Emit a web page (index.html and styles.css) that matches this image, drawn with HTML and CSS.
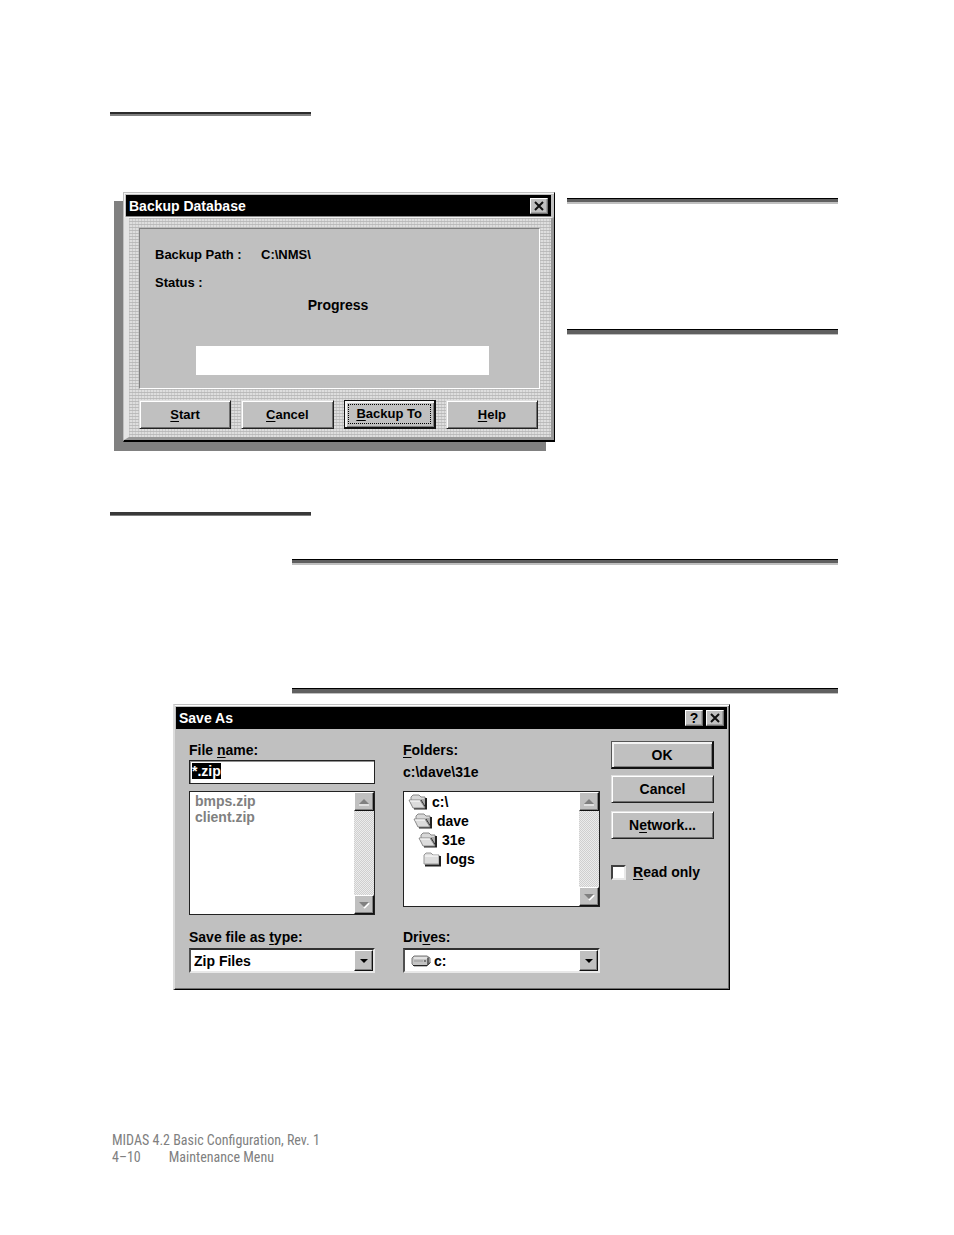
FILE: index.html
```html
<!DOCTYPE html>
<html lang="en">
<head>
<meta charset="utf-8">
<title>MIDAS 4.2 Basic Configuration</title>
<link rel="stylesheet" href="styles.css">
</head>
<body>
<svg class="defs" aria-hidden="true">
  <symbol id="close" viewBox="0 0 12 12"><path d="M2 2l8 8M10 2l-8 8" stroke="#111" stroke-width="2" fill="none"/></symbol>
  <symbol id="up" viewBox="0 0 12 12"><path d="M1 9h10" stroke="#fff"/><path d="M6 3l5 5H1z" fill="#808080"/></symbol>
  <symbol id="down" viewBox="0 0 12 12"><path d="M11 4l-5 5" stroke="#fff" stroke-width="2"/><path d="M1 3h10L6 8z" fill="#808080"/></symbol>
  <symbol id="drop" viewBox="0 0 12 12"><path d="M2 4h8L6 8z" fill="#000"/></symbol>
  <symbol id="open" viewBox="0 0 20 16">
    <path d="M3 6V3l2-2h6l2 2h4v3" fill="#d8d8d8" stroke="#888"/>
    <path d="M12 5h6v9z" fill="#aaa"/>
    <path d="M18 4v10.500H6" fill="none" stroke="#222" stroke-width="2"/>
    <path d="M1 6h11l5 8H5z" fill="#dcdcdc" stroke="#8a8a8a"/>
    <path d="M2 7h10" stroke="#fff"/>
    <path d="M13 6l5 8" stroke="#333"/>
  </symbol>
  <symbol id="shut" viewBox="0 0 20 16">
    <path d="M2 13V4l2-2h5l2 2h6v9z" fill="#dcdcdc" stroke="#999"/>
    <path d="M3 5h13" stroke="#fff"/>
    <path d="M3 14.500h15V5" fill="none" stroke="#222" stroke-width="2"/>
  </symbol>
  <symbol id="disk" viewBox="0 0 20 14">
    <path d="M3 2h13l3 2v5l-3 3H3l-2-2V4z" fill="#c4c4c4" stroke="#777"/>
    <path d="M3 4h13" stroke="#fff"/><path d="M3 7h9" stroke="#999"/><path d="M13 7h2" stroke="#333"/>
    <path d="M16 4l2-1v6l-2 2z" fill="#666"/><path d="M2 11.500h14l3-3" fill="none" stroke="#222"/>
  </symbol>
</svg>
<main class="page">
  <div class="rule rule-heading"></div>

  <div class="row">
    <section class="dialog backup" aria-label="Backup Database">
      <header class="titlebar"><h1>Backup Database</h1>
        <button class="tool" aria-label="Close"><svg><use href="#close"/></svg></button></header>
      <div class="backup-body">
        <div class="panel">
          <dl class="facts">
            <dt>Backup Path :</dt><dd>C:\NMS\</dd>
            <dt>Status :</dt><dd></dd>
          </dl>
          <label class="caption" for="progress">Progress</label>
          <progress id="progress" class="progress" value="0" max="100"></progress>
        </div>
        <div class="actions">
          <button class="btn"><span><u>S</u>tart</span></button>
          <button class="btn"><span><u>C</u>ancel</span></button>
          <button class="btn default focused"><span><u>B</u>ackup To</span></button>
          <button class="btn"><span><u>H</u>elp</span></button>
        </div>
      </div>
    </section>
    <div class="note note-side"></div>
  </div>

  <div class="rule rule-heading second"></div>
  <div class="note note-wide"></div>

  <section class="dialog save" aria-label="Save As">
    <header class="titlebar"><h1>Save As</h1>
      <button class="tool help">?</button>
      <button class="tool" aria-label="Close"><svg><use href="#close"/></svg></button></header>
    <div class="save-body">
      <div class="col files">
        <label for="name">File <u>n</u>ame:</label>
        <input id="name" class="field" type="text" value="*.zip">
        <div class="listbox">
          <ul class="items dim"><li>bmps.zip</li><li>client.zip</li></ul>
          <div class="scroll"><button aria-label="Up"><svg><use href="#up"/></svg></button><button aria-label="Down"><svg><use href="#down"/></svg></button></div>
        </div>
        <label class="lower" for="type">Save file as <u>t</u>ype:</label>
        <div class="combo"><select id="type"><option>Zip Files</option></select><span class="arrow"><svg><use href="#drop"/></svg></span></div>
      </div>
      <div class="col folders">
        <span class="label"><u>F</u>olders:</span>
        <span class="path">c:\dave\31e</span>
        <div class="listbox">
          <ul class="items tree">
            <li><svg><use href="#open"/></svg>c:\</li>
            <li><svg><use href="#open"/></svg>dave</li>
            <li><svg><use href="#open"/></svg>31e</li>
            <li><svg><use href="#shut"/></svg>logs</li>
          </ul>
          <div class="scroll"><button aria-label="Up"><svg><use href="#up"/></svg></button><button aria-label="Down"><svg><use href="#down"/></svg></button></div>
        </div>
        <label class="lower" for="drive">Dri<u>v</u>es:</label>
        <div class="combo drive"><svg class="disk"><use href="#disk"/></svg><select id="drive"><option>c:</option></select><span class="arrow"><svg><use href="#drop"/></svg></span></div>
      </div>
      <div class="col commands">
        <button class="btn default">OK</button>
        <button class="btn">Cancel</button>
        <button class="btn"><span>N<u>e</u>twork...</span></button>
        <label class="check"><input type="checkbox"><span><u>R</u>ead only</span></label>
      </div>
    </div>
  </section>

  <footer class="footer">
    <div>MIDAS 4.2 Basic Configuration, Rev. 1</div>
    <div class="folio"><span>4–10</span><span>Maintenance Menu</span></div>
  </footer>
</main>
<script src="main.js"></script>
</body>
</html>
```
FILE: styles.css
```css
* { box-sizing: border-box; }
body { margin: 0; background: #fff; color: #000; font: bold 14px/16px "Liberation Sans", Arial, sans-serif; }
button, input, select { margin: 0; font: inherit; color: inherit; border-radius: 0; }
button { padding: 0; }
h1, ul, dl, dd { margin: 0; padding: 0; }
h1 { font: inherit; }
ul { list-style: none; }
svg { display: block; }
u { text-underline-offset: 2px; text-decoration-thickness: 1px; }
.defs { display: none; }

.page { padding: 112px 116px 68px 110px; }
.rule-heading { width: 201px; border-top: 2px solid #2b2b2b; border-bottom: 2px solid #808080; }
.rule-heading.second { margin-top: 70px; border-top-width: 3px; border-top-color: #383838; border-bottom-width: 1px; }

.row { display: flex; margin: 76px 0 0 13px; gap: 12px; align-items: flex-start; }
.note { display: flex; flex-direction: column; justify-content: space-between; }
.note::before, .note::after { content: ""; height: 6px; background: linear-gradient(#000 1px, #606060 1px 4px, #c0c0c0 4px); }
.note::after { background: linear-gradient(#000 1px, #606060 1px 5px, #c0c0c0 5px); }
.note-side { flex: 1; height: 137px; margin-top: 6px; }
.note-wide { height: 135px; margin: 43px 0 10px 182px; }

.dialog { background: #c0c0c0; border: 1px solid #000; }
.titlebar { display: flex; align-items: center; gap: 3px; padding: 0 3px; background: #000; color: #fff; }
.titlebar h1 { flex: 1; }
.tool { display: grid; place-items: center; width: 18px; height: 16px; color: #000; background: #c0c0c0; border: 1px solid; border-color: #fff #707070 #707070 #fff; box-shadow: inset -1px -1px #a0a0a0; }
.tool svg { width: 12px; height: 12px; }
.help { line-height: 14px; }

.backup { width: 432px; border-width: 1px 1px 2px 1px; border-color: #c0c0c0 #000 #000 #c0c0c0; box-shadow: inset 1px 1px #f4f4f4, -9px 9px 0 #808080; }
.backup .titlebar { height: 22px; margin: 2px 3px 0 2px; border-bottom: 1px solid #888; }
.backup-body {
  padding: 10px 11px 8px 10px; border: 5px solid; border-width: 1px 3px 3px 5px;
  border-color: #f4f4f4 #989898 #989898 #e4e4e4;
  background: repeating-linear-gradient(90deg, #b4b4b470 0 1px, transparent 1px 3px), repeating-linear-gradient(#bcbcbc 0 1px, #dedede 1px 3px);
}
.panel { display: flex; flex-direction: column; height: 161px; padding: 18px 50px 13px 15px; background: #c0c0c0; border: 1px solid; border-color: #808080 #fff #fff #808080; font-size: 13px; }
.facts { display: grid; grid-template-columns: 106px 1fr; row-gap: 12px; }
.caption { align-self: center; margin: 6px 0 0 32px; font-size: 14px; }
.progress { appearance: none; width: auto; height: 29px; margin: auto 0 0 41px; background: #fff; border: 0; }
.progress::-webkit-progress-bar { background: #fff; }
.actions { display: grid; grid-template-columns: repeat(4, 1fr); gap: 10px; margin-top: 11px; padding-right: 2px; font-size: 13px; }
.actions .btn { min-width: 0; height: 29px; }

.btn { background: #c0c0c0; border: 1px solid; border-color: #e0e0e0 #222 #222 #e0e0e0; box-shadow: inset 1px 1px #fff, inset -1px -1px #707070; }
.btn.default { border: 2px solid #111; border-top-width: 1px; border-left-width: 1px; box-shadow: inset 2px 2px #f4f4f4, inset -1px -1px #808080; }
.save .btn.default { border-color: #555 #111 #111 #555; }
.btn.focused { padding: 3px; }
.btn.focused span { display: grid; grid-auto-flow: column; place-content: center; height: 100%; border: 1px dotted #000; white-space: pre; }

.save { width: 557px; margin-left: 63px; border-width: 1px 1px 1px 2px; border-color: #c0c0c0 #000 #000 #dcdcdc; box-shadow: inset 0 1px #fff, inset -1px -1px #707070; }
.save .titlebar { height: 22px; margin: 2px 2px 0 1px; }
.save-body { display: flex; padding: 13px 15px 16px 14px; }
.col { display: flex; flex-direction: column; }
.files { width: 186px; margin-right: 28px; }
.folders { width: 197px; margin-right: 11px; }
.commands { flex: 1; }
.field { width: 100%; height: 24px; margin-top: 2px; padding: 0 2px 2px; background: #fff; border: 1px solid #222; outline: none; box-shadow: inset 1px 1px #909090; }
.field::selection { background: #000; color: #fff; }
.listbox { display: flex; margin-top: 7px; background: #fff; border: 1px solid #222; height: 124px; }
.folders .listbox { height: 116px; margin-top: 11px; }
.items { flex: 1; padding: 1px 5px; line-height: 16px; }
.dim { color: #808080; }
.tree { padding: 0 4px; }
.tree li { display: flex; align-items: center; gap: 4px; height: 19px; }
.tree li:nth-child(2) { margin-left: 5px; }
.tree li:nth-child(3) { margin-left: 10px; }
.tree li:nth-child(4) { margin-left: 14px; }
.tree svg { width: 20px; height: 16px; }
.scroll { display: flex; flex-direction: column; justify-content: space-between; width: 20px; background: repeating-conic-gradient(#cfcfcf 0 25%, #ececec 0 50%) 0 0 / 2px 2px; }
.scroll button, .arrow { display: grid; place-items: center; width: 20px; height: 19px; background: #c0c0c0; border: 1px solid; border-color: #fff #111 #111 #fff; box-shadow: inset -1px -1px #808080; }
.scroll svg, .arrow svg { width: 12px; height: 12px; }
.path { margin-top: 6px; }
.lower { margin-top: 14px; }
.folders .lower { margin-top: 22px; }
.combo { display: flex; align-items: center; height: 25px; margin-top: 3px; background: #fff; border: 2px solid; border-color: #303030 #e8e8e8 #e8e8e8 #505050; }
.combo select { flex: 1; min-width: 0; height: 20px; appearance: none; padding: 0 3px; background: transparent; border: 0; }
.combo .arrow { width: 19px; height: 21px; }
.disk { width: 20px; height: 14px; margin-left: 6px; }
.commands .btn { height: 28px; margin-bottom: 8px; }
.commands .btn.default { margin: -1px 0 6px; }
.check { display: flex; align-items: center; gap: 7px; margin-top: 17px; white-space: nowrap; }
.check input { appearance: none; width: 15px; height: 15px; background: #fff; border: 2px solid; border-color: #404040 #e8e8e8 #e8e8e8 #404040; }

.footer { margin: 142px 0 0 2px; color: #808080; font: 14px/17px "Arial Narrow", "Roboto Condensed", Roboto, sans-serif; }
.folio { display: flex; gap: 28px; }
```
FILE: main.js
```js
const field = document.getElementById('name');
field.focus();
field.select();
```
